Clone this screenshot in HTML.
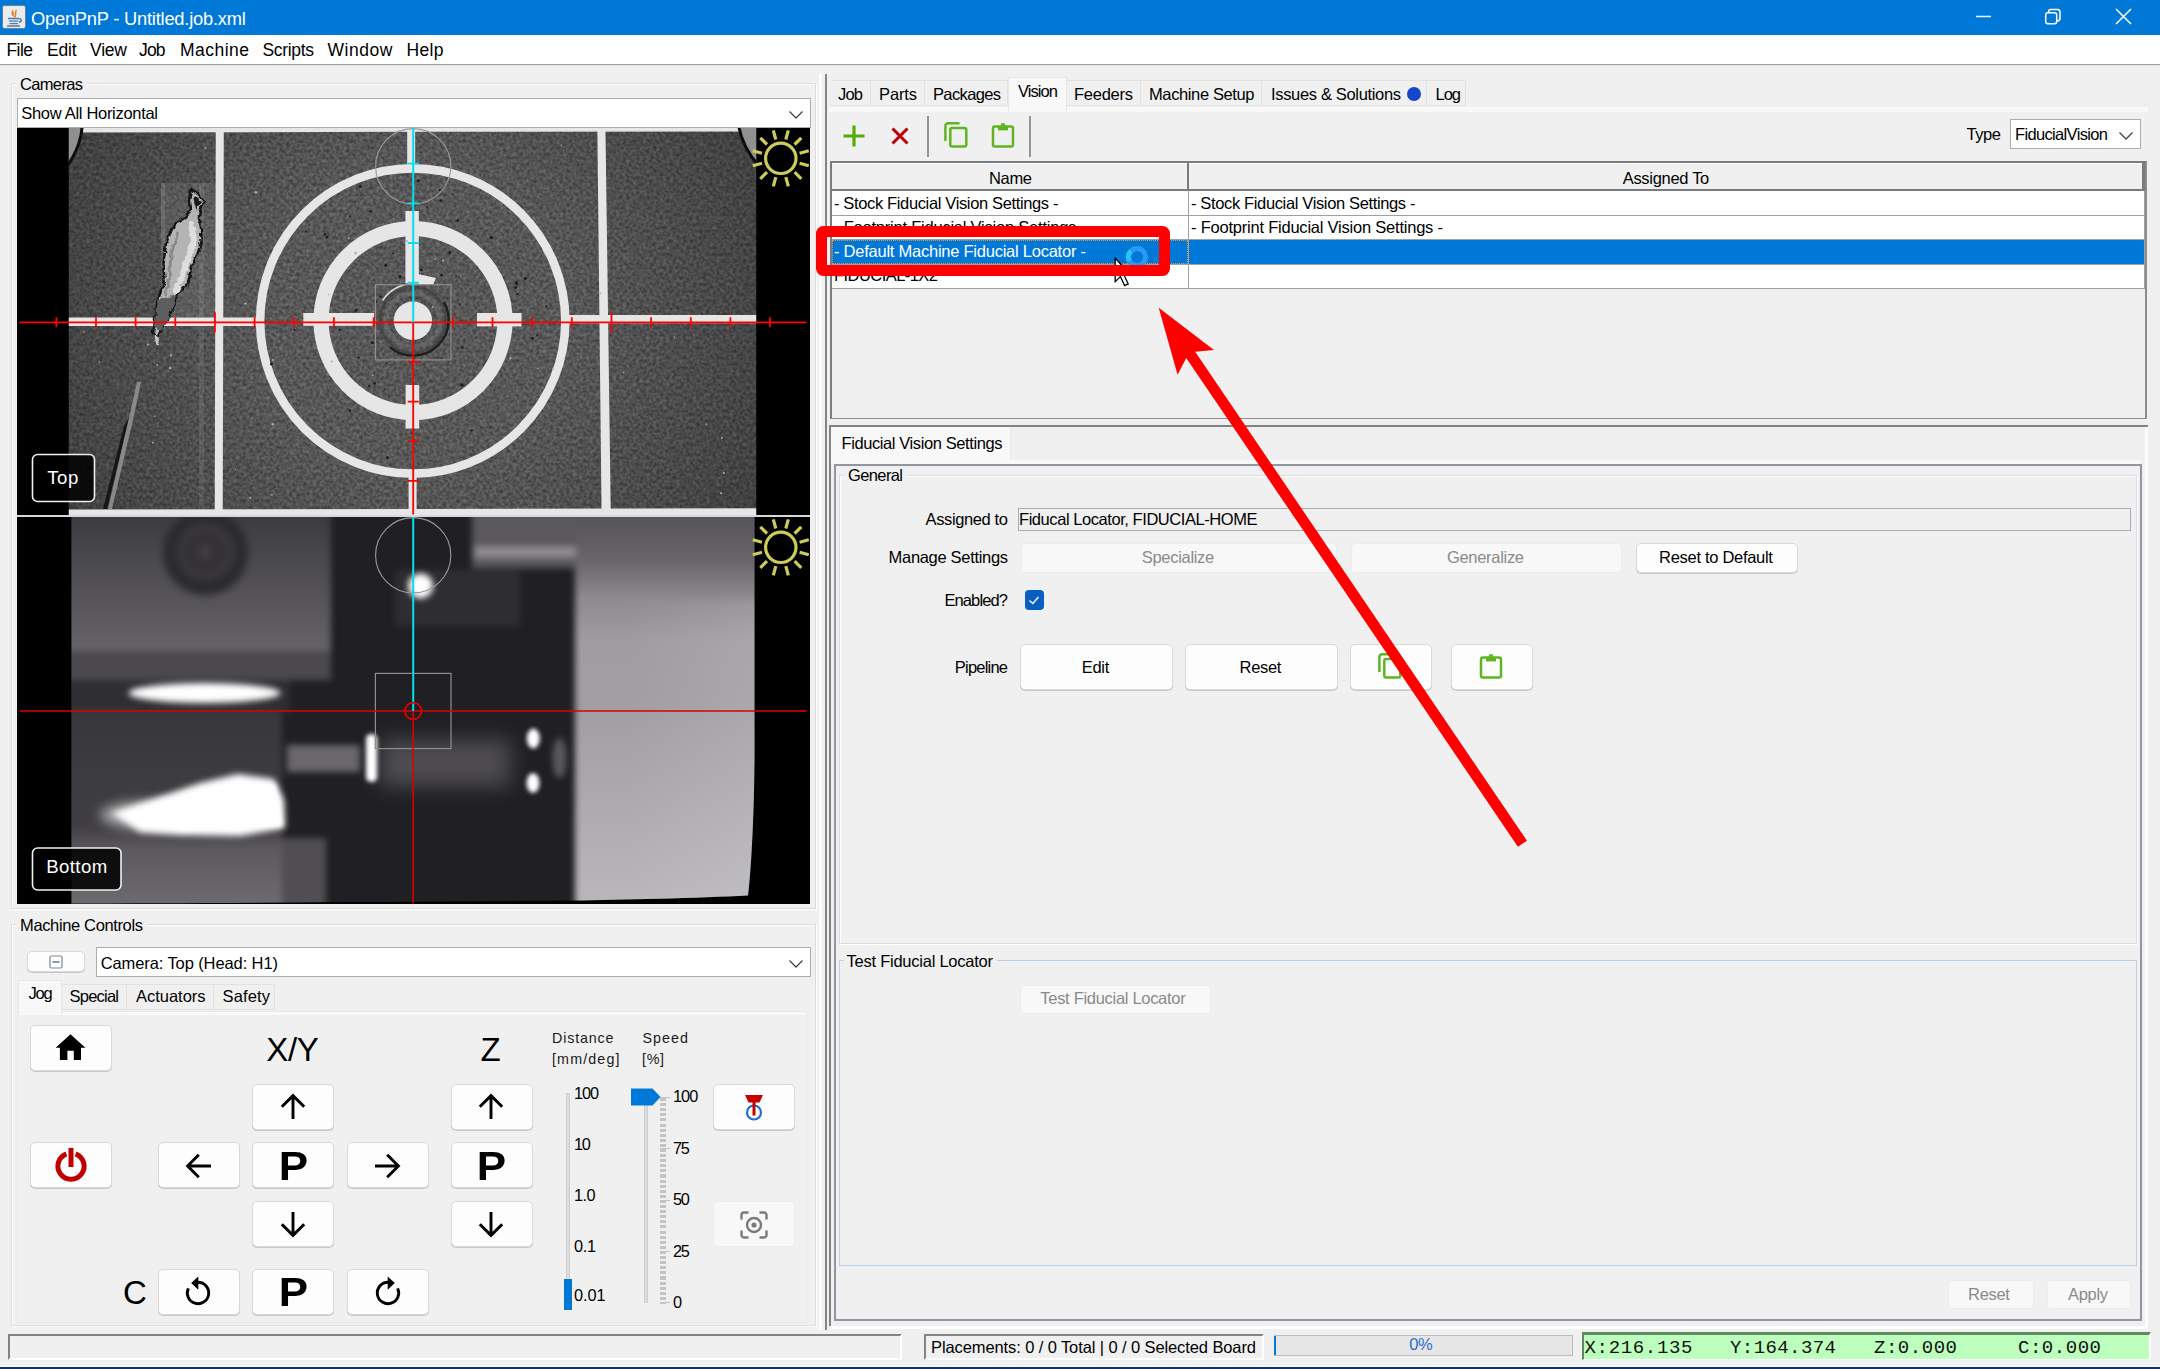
<!DOCTYPE html>
<html><head><meta charset="utf-8"><title>OpenPnP - Untitled.job.xml</title>
<style>
html,body{margin:0;padding:0;}
body{width:2160px;height:1369px;position:relative;overflow:hidden;background:#f0f0f0;font-family:"Liberation Sans",sans-serif;}
</style></head><body>
<div style="position:absolute;left:0px;top:0px;width:2160px;height:35px;background:#0078d7;"></div>
<svg style="position:absolute;left:2px;top:5px" width="24" height="24" viewBox="0 0 24 24">
<rect x="0.5" y="0.5" width="23" height="23" rx="2" fill="#e9ebee" stroke="#6e7f94" stroke-width="1"/>
<path d="M12 3 C9 6 14 8 11 12 C10 9 8 8 12 3Z" fill="#e8761b"/>
<path d="M14.5 5 C12 7.5 15.5 9 12.5 12.5" stroke="#e8761b" stroke-width="1.3" fill="none"/>
<path d="M6 13.5h11 M17 14c3-1 3 3 0 3" stroke="#4d79a8" stroke-width="1.4" fill="none"/>
<path d="M7 16.2h9.5 M7.5 18.6h8.5 M5 21h13" stroke="#4d79a8" stroke-width="1.3" fill="none"/>
</svg>
<span style="position:absolute;left:31.00px;top:8.66px;font:18.30px/20px 'Liberation Sans',sans-serif;color:#fff;letter-spacing:-0.216px;white-space:pre;">OpenPnP - Untitled.job.xml</span>
<svg style="position:absolute;left:1960px;top:0" width="200" height="35" viewBox="1960 0 200 35" fill="none" stroke="#fff" stroke-width="1.5">
<path d="M1976 16.5h15"/>
<rect x="2045.7" y="12.7" width="11" height="11" rx="2.2"/>
<path d="M2048.5 12.5v-0.6a2.4 2.4 0 0 1 2.4-2.4h6.5a2.6 2.6 0 0 1 2.6 2.6v6.3a2.4 2.4 0 0 1-2.4 2.4h-0.6"/>
<path d="M2116 9l15 15M2131 9l-15 15"/>
</svg>
<div style="position:absolute;left:0px;top:35px;width:2160px;height:29px;background:#fff;"></div>
<div style="position:absolute;left:0px;top:64px;width:2160px;height:1px;background:#a0a0a0;"></div>
<div style="position:absolute;left:0px;top:65px;width:2160px;height:1px;background:#e3e3e3;"></div>
<span style="position:absolute;left:6.50px;top:40.24px;font:17.50px/20px 'Liberation Sans',sans-serif;color:#000;letter-spacing:-0.567px;white-space:pre;">File</span>
<span style="position:absolute;left:47.00px;top:40.24px;font:17.50px/20px 'Liberation Sans',sans-serif;color:#000;letter-spacing:-0.219px;white-space:pre;">Edit</span>
<span style="position:absolute;left:90.00px;top:40.24px;font:17.50px/20px 'Liberation Sans',sans-serif;color:#000;letter-spacing:-0.206px;white-space:pre;">View</span>
<span style="position:absolute;left:139.00px;top:40.24px;font:17.50px/20px 'Liberation Sans',sans-serif;color:#000;letter-spacing:-0.808px;white-space:pre;">Job</span>
<span style="position:absolute;left:180.00px;top:40.24px;font:17.50px/20px 'Liberation Sans',sans-serif;color:#000;letter-spacing:0.475px;white-space:pre;">Machine</span>
<span style="position:absolute;left:262.50px;top:40.24px;font:17.50px/20px 'Liberation Sans',sans-serif;color:#000;letter-spacing:-0.331px;white-space:pre;">Scripts</span>
<span style="position:absolute;left:327.50px;top:40.24px;font:17.50px/20px 'Liberation Sans',sans-serif;color:#000;letter-spacing:0.551px;white-space:pre;">Window</span>
<span style="position:absolute;left:406.50px;top:40.24px;font:17.50px/20px 'Liberation Sans',sans-serif;color:#000;letter-spacing:0.336px;white-space:pre;">Help</span>
<div style="position:absolute;left:11px;top:83px;width:805px;height:826px;border:1px solid #dcdcdc;box-sizing:border-box;box-shadow:1px 1px 0 #fff, inset 1px 1px 0 #fff;"></div>
<div style="position:absolute;left:17px;top:81px;width:70px;height:6px;background:#f0f0f0;"></div>
<span style="position:absolute;left:20.00px;top:73.78px;font:16.50px/20px 'Liberation Sans',sans-serif;color:#000;letter-spacing:-0.656px;white-space:pre;">Cameras</span>
<div style="position:absolute;left:17px;top:98px;width:794px;height:30px;background:#fff;border:1px solid #abadb3;box-sizing:border-box;"></div>
<span style="position:absolute;left:21.30px;top:103.28px;font:16.50px/20px 'Liberation Sans',sans-serif;color:#000;letter-spacing:-0.303px;white-space:pre;">Show All Horizontal</span>
<svg style="position:absolute;left:788px;top:110px" width="16" height="10" viewBox="0 0 16 10"><path d="M1.5 1.5L8 8L14.5 1.5" fill="none" stroke="#444" stroke-width="1.3"/></svg>
<div style="position:absolute;left:11px;top:924px;width:805px;height:402px;border:1px solid #dcdcdc;box-sizing:border-box;box-shadow:1px 1px 0 #fff, inset 1px 1px 0 #fff;"></div>
<div style="position:absolute;left:17px;top:922px;width:130px;height:6px;background:#f0f0f0;"></div>
<span style="position:absolute;left:20.00px;top:914.78px;font:16.50px/20px 'Liberation Sans',sans-serif;color:#000;letter-spacing:-0.360px;white-space:pre;">Machine Controls</span>
<div style="position:absolute;left:27px;top:951px;width:58px;height:21px;background:#fdfdfd;border:1px solid #d9d9d9;border-radius:5px;box-sizing:border-box;box-shadow:0 1px 0 #c8c8c8;"></div>
<svg style="position:absolute;left:49px;top:955px" width="14" height="14" viewBox="0 0 14 14"><rect x="1" y="1" width="12" height="12" rx="1.5" fill="#fff" stroke="#7b8794" stroke-width="1.2"/><path d="M3.5 7h7" stroke="#4a6fa5" stroke-width="1.4"/></svg>
<div style="position:absolute;left:96px;top:947px;width:715px;height:30px;background:#fff;border:1px solid #abadb3;box-sizing:border-box;"></div>
<span style="position:absolute;left:100.70px;top:952.78px;font:16.50px/20px 'Liberation Sans',sans-serif;color:#000;letter-spacing:-0.102px;white-space:pre;">Camera: Top (Head: H1)</span>
<svg style="position:absolute;left:788px;top:959px" width="16" height="10" viewBox="0 0 16 10"><path d="M1.5 1.5L8 8L14.5 1.5" fill="none" stroke="#444" stroke-width="1.3"/></svg>
<div style="position:absolute;left:18px;top:1012px;width:788px;height:307px;background:#f0f0f0;border-top:3px solid #f8f8f8;box-shadow:0 0 0 1px #e8e8e8;"></div>
<div style="position:absolute;left:18px;top:980px;width:44px;height:34px;background:#f8f8f8;border:1px solid #e6e6e6;border-bottom:none;box-sizing:border-box;"></div>
<div style="position:absolute;left:62px;top:984px;width:65px;height:26px;background:#f0f0f0;border:1px solid #e2e2e2;border-left:none;box-sizing:border-box;"></div>
<div style="position:absolute;left:127px;top:984px;width:87px;height:26px;background:#f0f0f0;border:1px solid #e2e2e2;border-left:none;box-sizing:border-box;"></div>
<div style="position:absolute;left:214px;top:984px;width:61px;height:26px;background:#f0f0f0;border:1px solid #e2e2e2;border-left:none;box-sizing:border-box;"></div>
<span style="position:absolute;left:28.50px;top:983.28px;font:16.50px/20px 'Liberation Sans',sans-serif;color:#000;letter-spacing:-1.200px;white-space:pre;">Jog</span>
<span style="position:absolute;left:69.50px;top:986.28px;font:16.50px/20px 'Liberation Sans',sans-serif;color:#000;letter-spacing:-0.770px;white-space:pre;">Special</span>
<span style="position:absolute;left:136.00px;top:986.28px;font:16.50px/20px 'Liberation Sans',sans-serif;color:#000;letter-spacing:-0.025px;white-space:pre;">Actuators</span>
<span style="position:absolute;left:222.50px;top:986.28px;font:16.50px/20px 'Liberation Sans',sans-serif;color:#000;letter-spacing:0.144px;white-space:pre;">Safety</span>
<div style="position:absolute;left:30px;top:1025px;width:82px;height:46px;background:#fdfdfd;border:1px solid #d9d9d9;border-radius:5px;box-sizing:border-box;box-shadow:0 1px 0 #c8c8c8;"></div>
<svg style="position:absolute;left:55px;top:1033px" width="32" height="28" viewBox="0 0 32 28"><path d="M15.5 1.2L0.6 14.8H4.9V27H12.4V17.8H18.8V27H26V14.8H30.4Z" fill="#000"/></svg>
<div style="position:absolute;left:30px;top:1142px;width:82px;height:46px;background:#fdfdfd;border:1px solid #d9d9d9;border-radius:5px;box-sizing:border-box;box-shadow:0 1px 0 #c8c8c8;"></div>
<svg style="position:absolute;left:50.5px;top:1144px" width="40" height="42" viewBox="-20 -22.2 40 42"><path d="M-4.6 -12.3A13.1 13.1 0 1 0 4.6 -12.3" fill="none" stroke="#c00000" stroke-width="5"/><path d="M0 -18.3V0.8" stroke="#c00000" stroke-width="5"/></svg>
<span style="position:absolute;left:266.20px;top:1039.57px;font:33.00px/20px 'Liberation Sans',sans-serif;color:#000;letter-spacing:-0.300px;white-space:pre;">X/Y</span>
<span style="position:absolute;left:480.42px;top:1039.57px;font:33.00px/20px 'Liberation Sans',sans-serif;color:#000;letter-spacing:0.000px;white-space:pre;">Z</span>
<div style="position:absolute;left:252px;top:1084px;width:82px;height:46px;background:#fdfdfd;border:1px solid #d9d9d9;border-radius:5px;box-sizing:border-box;box-shadow:0 1px 0 #c8c8c8;"></div>
<svg style="position:absolute;left:278px;top:1092px;transform:rotate(0deg)" width="30" height="30" viewBox="-15 -15 30 30"><path d="M0 12V-10.5M-11.2 -0.2L0 -11.4L11.2 -0.2" fill="none" stroke="#000" stroke-width="2.9"/></svg>
<div style="position:absolute;left:451px;top:1084px;width:82px;height:46px;background:#fdfdfd;border:1px solid #d9d9d9;border-radius:5px;box-sizing:border-box;box-shadow:0 1px 0 #c8c8c8;"></div>
<svg style="position:absolute;left:476px;top:1092px;transform:rotate(0deg)" width="30" height="30" viewBox="-15 -15 30 30"><path d="M0 12V-10.5M-11.2 -0.2L0 -11.4L11.2 -0.2" fill="none" stroke="#000" stroke-width="2.9"/></svg>
<div style="position:absolute;left:158px;top:1142px;width:82px;height:46px;background:#fdfdfd;border:1px solid #d9d9d9;border-radius:5px;box-sizing:border-box;box-shadow:0 1px 0 #c8c8c8;"></div>
<svg style="position:absolute;left:183.5px;top:1150.5px;transform:rotate(-90deg)" width="30" height="30" viewBox="-15 -15 30 30"><path d="M0 12V-10.5M-11.2 -0.2L0 -11.4L11.2 -0.2" fill="none" stroke="#000" stroke-width="2.9"/></svg>
<div style="position:absolute;left:252px;top:1142px;width:82px;height:46px;background:#fdfdfd;border:1px solid #d9d9d9;border-radius:5px;box-sizing:border-box;box-shadow:0 1px 0 #c8c8c8;"></div>
<span style="position:absolute;left:279.96px;top:1155.74px;font:40.00px/20px 'Liberation Sans',sans-serif;font-weight:bold;color:#000;letter-spacing:0.000px;white-space:pre;transform:scaleX(1.1);">P</span>
<div style="position:absolute;left:347px;top:1142px;width:82px;height:46px;background:#fdfdfd;border:1px solid #d9d9d9;border-radius:5px;box-sizing:border-box;box-shadow:0 1px 0 #c8c8c8;"></div>
<svg style="position:absolute;left:372px;top:1150.5px;transform:rotate(90deg)" width="30" height="30" viewBox="-15 -15 30 30"><path d="M0 12V-10.5M-11.2 -0.2L0 -11.4L11.2 -0.2" fill="none" stroke="#000" stroke-width="2.9"/></svg>
<div style="position:absolute;left:451px;top:1142px;width:82px;height:46px;background:#fdfdfd;border:1px solid #d9d9d9;border-radius:5px;box-sizing:border-box;box-shadow:0 1px 0 #c8c8c8;"></div>
<span style="position:absolute;left:478.46px;top:1155.74px;font:40.00px/20px 'Liberation Sans',sans-serif;font-weight:bold;color:#000;letter-spacing:0.000px;white-space:pre;transform:scaleX(1.1);">P</span>
<div style="position:absolute;left:252px;top:1201px;width:82px;height:46px;background:#fdfdfd;border:1px solid #d9d9d9;border-radius:5px;box-sizing:border-box;box-shadow:0 1px 0 #c8c8c8;"></div>
<svg style="position:absolute;left:278px;top:1209px;transform:rotate(180deg)" width="30" height="30" viewBox="-15 -15 30 30"><path d="M0 12V-10.5M-11.2 -0.2L0 -11.4L11.2 -0.2" fill="none" stroke="#000" stroke-width="2.9"/></svg>
<div style="position:absolute;left:451px;top:1201px;width:82px;height:46px;background:#fdfdfd;border:1px solid #d9d9d9;border-radius:5px;box-sizing:border-box;box-shadow:0 1px 0 #c8c8c8;"></div>
<svg style="position:absolute;left:476px;top:1209px;transform:rotate(180deg)" width="30" height="30" viewBox="-15 -15 30 30"><path d="M0 12V-10.5M-11.2 -0.2L0 -11.4L11.2 -0.2" fill="none" stroke="#000" stroke-width="2.9"/></svg>
<span style="position:absolute;left:123.08px;top:1283.07px;font:33.00px/20px 'Liberation Sans',sans-serif;color:#000;letter-spacing:0.000px;white-space:pre;">C</span>
<div style="position:absolute;left:158px;top:1269px;width:82px;height:46px;background:#fdfdfd;border:1px solid #d9d9d9;border-radius:5px;box-sizing:border-box;box-shadow:0 1px 0 #c8c8c8;"></div>
<svg style="position:absolute;left:178.3px;top:1272.9px;transform:none" width="40" height="40" viewBox="-20 -20 40 40"><path d="M0 -10.7A10.7 10.7 0 1 1 -9.6 -4.7" fill="none" stroke="#000" stroke-width="2.9"/><path d="M0.3 -16.6V-3.2L-6.8 -9.9Z" fill="#000"/></svg>
<div style="position:absolute;left:252px;top:1269px;width:82px;height:46px;background:#fdfdfd;border:1px solid #d9d9d9;border-radius:5px;box-sizing:border-box;box-shadow:0 1px 0 #c8c8c8;"></div>
<span style="position:absolute;left:279.96px;top:1281.74px;font:40.00px/20px 'Liberation Sans',sans-serif;font-weight:bold;color:#000;letter-spacing:0.000px;white-space:pre;transform:scaleX(1.1);">P</span>
<div style="position:absolute;left:347px;top:1269px;width:82px;height:46px;background:#fdfdfd;border:1px solid #d9d9d9;border-radius:5px;box-sizing:border-box;box-shadow:0 1px 0 #c8c8c8;"></div>
<svg style="position:absolute;left:367.7px;top:1272.9px;transform:scale(-1,1)" width="40" height="40" viewBox="-20 -20 40 40"><path d="M0 -10.7A10.7 10.7 0 1 1 -9.6 -4.7" fill="none" stroke="#000" stroke-width="2.9"/><path d="M0.3 -16.6V-3.2L-6.8 -9.9Z" fill="#000"/></svg>
<span style="position:absolute;left:552.00px;top:1028.05px;font:14.30px/20px 'Liberation Sans',sans-serif;color:#1a1a1a;letter-spacing:0.838px;white-space:pre;">Distance</span>
<span style="position:absolute;left:552.00px;top:1049.05px;font:14.30px/20px 'Liberation Sans',sans-serif;color:#1a1a1a;letter-spacing:1.128px;white-space:pre;">[mm/deg]</span>
<span style="position:absolute;left:642.50px;top:1028.05px;font:14.30px/20px 'Liberation Sans',sans-serif;color:#1a1a1a;letter-spacing:1.037px;white-space:pre;">Speed</span>
<span style="position:absolute;left:642.00px;top:1049.05px;font:14.30px/20px 'Liberation Sans',sans-serif;color:#1a1a1a;letter-spacing:0.670px;white-space:pre;">[%]</span>
<div style="position:absolute;left:566px;top:1093px;width:4px;height:210px;background:#dcdcdc;border:1px solid #cfcfcf;box-sizing:border-box;"></div>
<div style="position:absolute;left:564px;top:1279px;width:8px;height:31px;background:#0078d7;"></div>
<span style="position:absolute;left:574.00px;top:1082.85px;font:16.30px/20px 'Liberation Sans',sans-serif;color:#000;letter-spacing:-1.098px;white-space:pre;">100</span>
<span style="position:absolute;left:574.00px;top:1133.85px;font:16.30px/20px 'Liberation Sans',sans-serif;color:#000;letter-spacing:-1.200px;white-space:pre;">10</span>
<span style="position:absolute;left:574.00px;top:1184.85px;font:16.30px/20px 'Liberation Sans',sans-serif;color:#000;letter-spacing:-0.580px;white-space:pre;">1.0</span>
<span style="position:absolute;left:574.00px;top:1235.85px;font:16.30px/20px 'Liberation Sans',sans-serif;color:#000;letter-spacing:-0.330px;white-space:pre;">0.1</span>
<span style="position:absolute;left:574.00px;top:1285.35px;font:16.30px/20px 'Liberation Sans',sans-serif;color:#000;letter-spacing:-0.075px;white-space:pre;">0.01</span>
<div style="position:absolute;left:644px;top:1100px;width:4px;height:203px;background:#dcdcdc;border:1px solid #cfcfcf;box-sizing:border-box;"></div>
<svg style="position:absolute;left:631px;top:1088px" width="30" height="18" viewBox="0 0 30 18"><path d="M0 0.5H21.5L29.5 9L21.5 17.5H0Z" fill="#0078d7"/></svg>
<div style="position:absolute;left:660px;top:1098px;width:6px;height:206px;background:repeating-linear-gradient(#c4c4c4 0,#c4c4c4 3px,transparent 3px,transparent 5.1px);"></div>
<div style="position:absolute;left:660px;top:1097px;width:10px;height:1px;background:#c4c4c4;"></div>
<div style="position:absolute;left:660px;top:1148px;width:10px;height:1px;background:#c4c4c4;"></div>
<div style="position:absolute;left:660px;top:1199.5px;width:10px;height:1px;background:#c4c4c4;"></div>
<div style="position:absolute;left:660px;top:1250.5px;width:10px;height:1px;background:#c4c4c4;"></div>
<div style="position:absolute;left:660px;top:1302px;width:10px;height:1px;background:#c4c4c4;"></div>
<span style="position:absolute;left:673.00px;top:1086.25px;font:16.30px/20px 'Liberation Sans',sans-serif;color:#000;letter-spacing:-0.948px;white-space:pre;">100</span>
<span style="position:absolute;left:673.00px;top:1137.95px;font:16.30px/20px 'Liberation Sans',sans-serif;color:#000;letter-spacing:-1.200px;white-space:pre;">75</span>
<span style="position:absolute;left:673.00px;top:1189.35px;font:16.30px/20px 'Liberation Sans',sans-serif;color:#000;letter-spacing:-1.200px;white-space:pre;">50</span>
<span style="position:absolute;left:673.00px;top:1240.75px;font:16.30px/20px 'Liberation Sans',sans-serif;color:#000;letter-spacing:-1.200px;white-space:pre;">25</span>
<span style="position:absolute;left:673.00px;top:1292.15px;font:16.30px/20px 'Liberation Sans',sans-serif;color:#000;letter-spacing:0.000px;white-space:pre;">0</span>
<div style="position:absolute;left:713px;top:1084px;width:82px;height:46px;background:#fdfdfd;border:1px solid #d9d9d9;border-radius:5px;box-sizing:border-box;box-shadow:0 1px 0 #c8c8c8;"></div>
<svg style="position:absolute;left:738px;top:1092px" width="32" height="32" viewBox="0 0 32 32"><path d="M7 3h18l-3.5 7.5h-11Z" fill="#c80000"/><circle cx="16" cy="20.5" r="7" fill="none" stroke="#1f6fd6" stroke-width="2.2"/><path d="M16 10v13.5" stroke="#c80000" stroke-width="3"/></svg>
<div style="position:absolute;left:713px;top:1201px;width:82px;height:46px;background:#f8f8f8;border:1px solid #ececec;border-radius:4px;box-sizing:border-box;"></div>
<svg style="position:absolute;left:738px;top:1209px" width="32" height="32" viewBox="0 0 32 32" fill="none" stroke="#7a7a7a" stroke-width="2.4"><path d="M3.5 10.5V6a2.5 2.5 0 0 1 2.5-2.5h4.5M21.5 3.5H26a2.5 2.5 0 0 1 2.5 2.5v4.5M28.5 21.5V26a2.5 2.5 0 0 1-2.5 2.5h-4.5M10.5 28.5H6A2.5 2.5 0 0 1 3.5 26v-4.5"/><circle cx="16" cy="16" r="7"/><circle cx="16" cy="16" r="2.6" fill="#7a7a7a" stroke="none"/></svg>
<div style="position:absolute;left:819px;top:74px;width:3px;height:1256px;background:#fcfcfc;"></div>
<div style="position:absolute;left:825px;top:74px;width:2px;height:1256px;background:#858585;"></div>
<div style="position:absolute;left:8px;top:1334px;width:894px;height:26px;border-top:2px solid #848484;border-left:2px solid #848484;border-bottom:2px solid #fff;border-right:2px solid #fff;box-sizing:border-box;"></div>
<div style="position:absolute;left:924px;top:1334px;width:340px;height:26px;border-top:2px solid #848484;border-left:2px solid #848484;border-bottom:2px solid #fff;border-right:2px solid #fff;box-sizing:border-box;"></div>
<span style="position:absolute;left:931.00px;top:1337.28px;font:16.50px/20px 'Liberation Sans',sans-serif;color:#000;letter-spacing:-0.102px;white-space:pre;">Placements: 0 / 0 Total | 0 / 0 Selected Board</span>
<div style="position:absolute;left:1274px;top:1335px;width:299px;height:21px;background:#e6e6e6;border:1px solid #bcbcbc;box-sizing:border-box;"></div>
<div style="position:absolute;left:1274px;top:1336px;width:2px;height:19px;background:#0078d7;"></div>
<span style="position:absolute;left:1409.23px;top:1334.28px;font:16.50px/20px 'Liberation Sans',sans-serif;color:#2a6fc9;letter-spacing:-0.300px;white-space:pre;">0%</span>
<div style="position:absolute;left:1582px;top:1332px;width:569px;height:28px;background:#bdffbd;border-top:3px solid #5f8a5f;border-left:2px solid #5f8a5f;border-right:2px solid #fff;border-bottom:1px solid #fff;box-sizing:border-box;"></div>
<span style="position:absolute;left:1584.50px;top:1338.42px;font:19.00px/20px 'Liberation Mono',monospace;color:#111;letter-spacing:0.673px;white-space:pre;">X:216.135</span>
<span style="position:absolute;left:1730.00px;top:1338.42px;font:19.00px/20px 'Liberation Mono',monospace;color:#111;letter-spacing:0.423px;white-space:pre;">Y:164.374</span>
<span style="position:absolute;left:1874.00px;top:1338.42px;font:19.00px/20px 'Liberation Mono',monospace;color:#111;letter-spacing:0.532px;white-space:pre;">Z:0.000</span>
<span style="position:absolute;left:2018.00px;top:1338.42px;font:19.00px/20px 'Liberation Mono',monospace;color:#111;letter-spacing:0.532px;white-space:pre;">C:0.000</span>
<div style="position:absolute;left:0px;top:1366px;width:2160px;height:1px;background:#fbfbfb;"></div>
<div style="position:absolute;left:0px;top:1367px;width:2160px;height:2px;background:#12306a;"></div>
<div style="position:absolute;left:17px;top:515px;width:793px;height:2px;background:#d8d8d8;"></div>
<svg style="position:absolute;left:17px;top:128px" width="793" height="387" viewBox="17 128 793 387">
<defs>
<filter id="nz" x="0" y="0" width="100%" height="100%" color-interpolation-filters="sRGB">
<feTurbulence type="fractalNoise" baseFrequency="0.3" numOctaves="2" seed="7" result="t"/>
<feColorMatrix in="t" type="matrix" values="0.3 0 0 0 0.195  0.3 0 0 0 0.195  0.3 0 0 0 0.195  0 0 0 0 1"/>
</filter>
<filter id="rough" x="-20%" y="-10%" width="140%" height="120%" color-interpolation-filters="sRGB"><feTurbulence type="fractalNoise" baseFrequency="0.18" numOctaves="2" seed="11" result="t"/><feDisplacementMap in="SourceGraphic" in2="t" scale="5" xChannelSelector="R" yChannelSelector="G"/><feGaussianBlur stdDeviation="0.5"/></filter>
<filter id="b1" color-interpolation-filters="sRGB"><feGaussianBlur stdDeviation="0.7"/></filter>
<filter id="b3" x="-50%" y="-50%" width="200%" height="200%" color-interpolation-filters="sRGB"><feGaussianBlur stdDeviation="3"/></filter>
<radialGradient id="vg" cx="413" cy="322" r="430" gradientUnits="userSpaceOnUse"><stop offset="0" stop-color="#000" stop-opacity="0"/><stop offset="0.35" stop-color="#000" stop-opacity="0"/><stop offset="0.7" stop-color="#000" stop-opacity="0.17"/><stop offset="1" stop-color="#000" stop-opacity="0.32"/></radialGradient>
<clipPath id="tc"><rect x="68.8" y="128" width="687.4" height="387"/></clipPath>
</defs>
<rect x="17" y="128" width="793" height="387" fill="#000"/>
<g clip-path="url(#tc)"><rect x="60" y="120" width="710" height="400" filter="url(#nz)"/><rect x="60" y="120" width="710" height="400" fill="url(#vg)"/><g filter="url(#b1)"><path d="M60 120H770V131.4L413 131.8L60 132.6Z" fill="#e6e6e6"/><path d="M60 509.4L413 509L770 508.3V520H60Z" fill="#e6e6e6"/><path d="M60 120H82.5C82.5 138 77 152 66 168Z" fill="#909090" stroke="#0c0c0c" stroke-width="3"/><path d="M770 120H737.5C740 138 748 154 759 166Z" fill="#909090" stroke="#0c0c0c" stroke-width="3"/><path d="M215.8 125H223.8L222.7 515H214.7Z" fill="#e6e6e6"/><path d="M597.3 125H605.4L610.8 515H601.6Z" fill="#e6e6e6"/><rect x="407.2" y="125" width="8" height="45" fill="#e6e6e6"/><rect x="408.6" y="472" width="8" height="45" fill="#e6e6e6"/><path d="M60 317.4H258V326H60Z" fill="#e6e6e6"/><path d="M566 315H770V323.3H566Z" fill="#e6e6e6"/><circle cx="412.7" cy="321" r="152.6" fill="none" stroke="#e6e6e6" stroke-width="8.6"/><circle cx="413" cy="320.6" r="92" fill="none" stroke="#e6e6e6" stroke-width="15.2"/><rect x="405.4" y="211" width="13.4" height="72" fill="#e6e6e6"/><path d="M418 274L436 278L433 285H418Z" fill="#e6e6e6"/><rect x="405.6" y="385" width="13.6" height="43.6" fill="#e6e6e6"/><rect x="303.3" y="313" width="70.7" height="12.8" fill="#e6e6e6"/><rect x="477" y="313" width="44.5" height="13.4" fill="#e6e6e6"/><circle cx="413.1" cy="320" r="36.6" fill="#000" fill-opacity="0.04"/><circle cx="413.1" cy="320" r="35.6" fill="none" stroke="#1e1e1e" stroke-width="2.4" stroke-dasharray="100 123.7" stroke-dashoffset="19"/><circle cx="413.1" cy="320" r="36.2" fill="none" stroke="#dadada" stroke-width="1.5" stroke-dasharray="42 185.4" stroke-dashoffset="-134"/><circle cx="413.1" cy="320" r="33" fill="none" stroke="#3a3a3a" stroke-opacity="0.5" stroke-width="3"/><circle cx="413.1" cy="320" r="27" fill="none" stroke="#8a8a8a" stroke-opacity="0.25" stroke-width="5"/><circle cx="412.9" cy="320.7" r="19.2" fill="#e6e6e6"/><rect x="161" y="183" width="55" height="134" fill="#fff" opacity="0.075"/><rect x="161" y="183" width="4" height="70" fill="#fff" opacity="0.10"/><rect x="199" y="183" width="5" height="330" fill="#fff" opacity="0.08"/><g filter="url(#rough)"><path d="M191 189.5L196 192L204 201.5L200 211L198.9 217.3L201 228L201.5 241L197.5 254L191 267.3L188.3 283L176.5 295L172.6 308L167.3 321.2L160 331L156.8 338.2L153 332L154.2 326.4L155.5 314.6L158.1 298.8L164.7 281.7L163.4 264.6L166 243.6L172 229L177.8 221.3L186 218L190 210L189 200Z" fill="#b4b4b4" stroke="#141414" stroke-width="2.4" stroke-linejoin="round"/><path d="M158.5 299L176 295.5L172.6 308L167.3 321.2L160 331L154.5 326L155.5 314.6Z" fill="#5e5e5e"/><path d="M191 224L194 240L188 258L182 276L176 290" fill="none" stroke="#dedede" stroke-width="6" stroke-linejoin="round" stroke-linecap="round"/><path d="M178 232L171 255L169 280L165 296" fill="none" stroke="#8a8a8a" stroke-width="3" stroke-linejoin="round"/><path d="M193 196L201 201L196 210Z" fill="#1a1a1a"/><path d="M156 336L158 345" stroke="#c8c8c8" stroke-width="3" fill="none"/></g><path d="M129 418L107 509L103 509L124 426Z" fill="#161616"/><path d="M141 382L133 420L112 509L108 509L129 418L137 382Z" fill="#9a9a9a" opacity="0.8"/></g><g fill="#1c1c1c"><circle cx="327.0" cy="237.2" r="1.4"/><circle cx="525.2" cy="278.6" r="1.5"/><circle cx="516.2" cy="282.6" r="1.5"/><circle cx="376.0" cy="302.4" r="0.8"/><circle cx="387.4" cy="457.6" r="1.4"/><circle cx="480.8" cy="427.3" r="0.7"/><circle cx="373.3" cy="284.9" r="0.6"/><circle cx="456.3" cy="275.7" r="0.8"/><circle cx="546.4" cy="306.2" r="0.9"/><circle cx="385.8" cy="265.2" r="1.5"/><circle cx="360.4" cy="186.5" r="1.5"/><circle cx="389.2" cy="396.3" r="0.8"/><circle cx="441.7" cy="358.3" r="0.9"/><circle cx="380.8" cy="296.6" r="1.3"/><circle cx="374.5" cy="383.6" r="1.4"/><circle cx="339.4" cy="329.9" r="1.1"/><circle cx="400.0" cy="276.7" r="1.6"/><circle cx="532.7" cy="338.3" r="1.4"/><circle cx="537.3" cy="335.2" r="1.0"/><circle cx="376.9" cy="301.6" r="0.6"/><circle cx="473.2" cy="450.9" r="0.8"/><circle cx="418.1" cy="180.7" r="1.5"/><circle cx="369.2" cy="385.9" r="1.1"/><circle cx="421.3" cy="270.0" r="1.3"/><circle cx="451.8" cy="194.0" r="0.6"/><circle cx="460.0" cy="304.4" r="0.9"/><circle cx="306.2" cy="231.7" r="0.9"/><circle cx="384.6" cy="389.6" r="0.8"/><circle cx="462.4" cy="347.5" r="1.3"/><circle cx="470.4" cy="319.8" r="0.6"/><circle cx="358.5" cy="357.6" r="1.2"/><circle cx="372.4" cy="342.7" r="1.5"/><circle cx="441.5" cy="275.0" r="1.3"/><circle cx="515.8" cy="287.5" r="1.4"/><circle cx="490.6" cy="426.8" r="0.9"/><circle cx="271.4" cy="363.9" r="1.5"/><circle cx="294.5" cy="329.8" r="1.1"/><circle cx="461.9" cy="385.2" r="1.6"/><circle cx="517.3" cy="294.1" r="1.1"/><circle cx="386.8" cy="363.2" r="0.9"/><circle cx="439.7" cy="190.0" r="1.0"/><circle cx="440.8" cy="200.5" r="1.3"/><circle cx="350.2" cy="216.3" r="1.0"/><circle cx="393.2" cy="253.5" r="1.1"/><circle cx="427.2" cy="207.3" r="0.9"/><circle cx="516.8" cy="284.0" r="1.2"/><circle cx="412.5" cy="433.5" r="1.1"/><circle cx="457.7" cy="220.6" r="1.4"/><circle cx="349.8" cy="410.5" r="1.3"/><circle cx="449.7" cy="252.4" r="1.4"/><circle cx="491.2" cy="237.6" r="1.6"/><circle cx="356.0" cy="310.4" r="1.4"/><circle cx="370.6" cy="211.2" r="1.3"/><circle cx="471.6" cy="430.6" r="1.2"/><circle cx="324.9" cy="234.3" r="1.2"/></g><g fill="#b0b0b0"><circle cx="561.3" cy="145.2" r="0.7"/><circle cx="372.7" cy="375.5" r="0.8"/><circle cx="538.0" cy="368.4" r="0.6"/><circle cx="393.3" cy="218.7" r="0.6"/><circle cx="165.1" cy="252.4" r="0.7"/><circle cx="205.5" cy="148.2" r="0.9"/><circle cx="331.7" cy="361.4" r="1.0"/><circle cx="235.5" cy="469.2" r="0.6"/><circle cx="348.6" cy="238.1" r="0.9"/><circle cx="152.7" cy="442.6" r="0.9"/><circle cx="99.3" cy="362.0" r="0.7"/><circle cx="443.0" cy="260.6" r="1.0"/><circle cx="721.9" cy="437.9" r="0.9"/><circle cx="623.8" cy="372.6" r="0.9"/><circle cx="170.9" cy="355.5" r="1.0"/><circle cx="721.1" cy="493.2" r="1.0"/><circle cx="312.0" cy="465.6" r="0.6"/><circle cx="147.8" cy="344.4" r="1.0"/><circle cx="170.0" cy="367.9" r="1.2"/><circle cx="328.7" cy="294.7" r="0.8"/><circle cx="271.8" cy="494.8" r="0.9"/><circle cx="723.8" cy="473.1" r="1.0"/><circle cx="250.4" cy="498.0" r="0.9"/><circle cx="355.5" cy="253.1" r="1.3"/><circle cx="406.9" cy="241.0" r="0.9"/><circle cx="157.3" cy="365.0" r="0.9"/><circle cx="272.8" cy="424.2" r="1.2"/><circle cx="83.9" cy="332.0" r="0.8"/><circle cx="706.3" cy="424.3" r="0.8"/><circle cx="255.7" cy="192.3" r="1.3"/><circle cx="272.9" cy="360.0" r="0.9"/><circle cx="510.3" cy="358.4" r="1.1"/><circle cx="154.8" cy="416.3" r="0.8"/><circle cx="435.1" cy="259.4" r="0.8"/><circle cx="432.7" cy="306.8" r="0.9"/><circle cx="577.9" cy="353.6" r="0.6"/><circle cx="245.4" cy="303.6" r="1.2"/><circle cx="674.4" cy="336.9" r="0.6"/><circle cx="600.4" cy="293.3" r="1.0"/><circle cx="553.0" cy="368.9" r="0.9"/></g></g>
<circle cx="413.2" cy="166.2" r="37.6" fill="none" stroke="#9a9a9a" stroke-width="1.1"/><rect x="375.4" y="284.7" width="75.6" height="75.2" fill="none" stroke="#8e8e8e" stroke-width="1.2"/><path d="M19.5 322.3H806.5M413.2 322.3V514.5" stroke="#ff0000" stroke-width="1.8" fill="none"/><path d="M413.2 128V322.3" stroke="#00e0ee" stroke-width="2" fill="none"/><path d="M56.4 317.3V327.3M96.0 317.3V327.3M135.6 317.3V327.3M175.3 317.3V327.3M214.9 312.3V332.3M254.6 317.3V327.3M294.2 317.3V327.3M333.9 317.3V327.3M373.6 317.3V327.3M452.8 317.3V327.3M492.5 317.3V327.3M532.1 317.3V327.3M571.8 317.3V327.3M611.5 312.3V332.3M651.1 317.3V327.3M690.8 317.3V327.3M730.4 317.3V327.3M770.0 317.3V327.3M407.7 361.9H418.7M407.7 401.6H418.7M407.7 441.2H418.7M407.7 480.9H418.7" stroke="#ff0000" stroke-width="1.8" fill="none"/><path d="M407.7 282.7H418.7M407.7 243.0H418.7M407.7 203.4H418.7M407.7 163.7H418.7" stroke="#00e0ee" stroke-width="1.8" fill="none"/><g stroke="#cccc58" stroke-width="3.2" fill="none" stroke-linecap="butt"><circle cx="780.8" cy="158.3" r="15.2"/><path d="M799.6 163.3L808.8 165.8"/><path d="M794.6 172.1L801.3 178.8"/><path d="M785.8 177.1L788.3 186.3"/><path d="M775.8 177.1L773.3 186.3"/><path d="M767.0 172.1L760.3 178.8"/><path d="M762.0 163.3L752.8 165.8"/><path d="M762.0 153.3L752.8 150.8"/><path d="M767.0 144.5L760.3 137.8"/><path d="M775.8 139.5L773.3 130.3"/><path d="M785.8 139.5L788.3 130.3"/><path d="M794.6 144.5L801.3 137.8"/><path d="M799.6 153.3L808.8 150.8"/></g><rect x="32.5" y="454.5" width="62" height="47" rx="5" fill="#000" fill-opacity="0.85" stroke="#f0f0f0" stroke-width="1.6"/></svg>
<span style="position:absolute;left:47.30px;top:468.36px;font:18.60px/20px 'Liberation Sans',sans-serif;color:#fff;letter-spacing:0.505px;white-space:pre;">Top</span>
<svg style="position:absolute;left:17px;top:517px" width="793" height="387" viewBox="17 517 793 387">
<defs>
<filter id="g2" x="-50%" y="-50%" width="200%" height="200%" color-interpolation-filters="sRGB"><feGaussianBlur stdDeviation="2"/></filter>
<filter id="g3" x="-50%" y="-50%" width="200%" height="200%" color-interpolation-filters="sRGB"><feGaussianBlur stdDeviation="3.2"/></filter>
<filter id="g6" x="-50%" y="-50%" width="200%" height="200%" color-interpolation-filters="sRGB"><feGaussianBlur stdDeviation="6"/></filter>
<filter id="g10" x="-50%" y="-50%" width="200%" height="200%" color-interpolation-filters="sRGB"><feGaussianBlur stdDeviation="10"/></filter>
<clipPath id="bc"><path d="M71.5 517H754.5V760C754 820 751 870 748 895.5C700 898 620 900 573 900.5C400 902 200 903 71.5 903.5Z"/></clipPath>
<linearGradient id="ga" x1="0" y1="517" x2="0" y2="650" gradientUnits="userSpaceOnUse"><stop offset="0" stop-color="#3c3c40"/><stop offset="0.55" stop-color="#545257"/><stop offset="1" stop-color="#656368"/></linearGradient>
<linearGradient id="gb" x1="0" y1="711" x2="0" y2="903" gradientUnits="userSpaceOnUse"><stop offset="0" stop-color="#38383c"/><stop offset="0.6" stop-color="#403e42"/><stop offset="0.72" stop-color="#5c5a5e"/><stop offset="1" stop-color="#6c6a6e"/></linearGradient>
<linearGradient id="gr" x1="0" y1="517" x2="0" y2="903" gradientUnits="userSpaceOnUse"><stop offset="0" stop-color="#57555a"/><stop offset="0.11" stop-color="#676569"/><stop offset="0.215" stop-color="#8e8c90"/><stop offset="0.32" stop-color="#9f9da1"/><stop offset="0.5" stop-color="#a19fa3"/><stop offset="1" stop-color="#b9b7bb"/></linearGradient>
<linearGradient id="gh" x1="575" y1="0" x2="760" y2="0" gradientUnits="userSpaceOnUse"><stop offset="0.3" stop-color="#fff" stop-opacity="0"/><stop offset="1" stop-color="#fff" stop-opacity="0.1"/></linearGradient>
<radialGradient id="gc" cx="205.5" cy="552" r="48" gradientUnits="userSpaceOnUse"><stop offset="0" stop-color="#48464a"/><stop offset="0.12" stop-color="#3a383c"/><stop offset="0.3" stop-color="#302e32"/><stop offset="0.5" stop-color="#3a383c"/><stop offset="0.72" stop-color="#29292d"/><stop offset="0.85" stop-color="#2e2e32"/><stop offset="1" stop-color="#48464a" stop-opacity="0"/></radialGradient>
</defs>
<rect x="17" y="517" width="793" height="387" fill="#000"/>
<g clip-path="url(#bc)"><rect x="60" y="510" width="710" height="400" fill="#202024"/><g filter="url(#g3)"><rect x="60" y="505" width="271" height="147" fill="url(#ga)"/><rect x="60" y="651" width="271" height="29" fill="#4b494d"/><rect x="60" y="680" width="230" height="32" fill="#2f2f33"/><rect x="60" y="711" width="222" height="200" fill="url(#gb)"/><rect x="282" y="838" width="44" height="70" fill="#504e52"/><circle cx="205.5" cy="552" r="48" fill="url(#gc)"/><rect x="575" y="505" width="195" height="410" fill="url(#gr)"/><rect x="575" y="600" width="195" height="310" fill="url(#gh)"/><rect x="472" y="505" width="104" height="63" fill="#5a585c"/><rect x="474" y="546" width="102" height="12" fill="#8c8a8e"/><rect x="395" y="570" width="125" height="56" fill="#2e2e32"/><rect x="287" y="745" width="73" height="27" fill="#69676b"/></g><rect x="380" y="740" width="130" height="46" fill="#4e4c50" filter="url(#g10)"/><ellipse cx="559.5" cy="758" rx="7" ry="20" fill="#5a585c" filter="url(#g3)"/><ellipse cx="204.5" cy="693" rx="76" ry="10" fill="#fff" filter="url(#g3)"/><ellipse cx="150" cy="815" rx="50" ry="14" fill="#fff" fill-opacity="0.55" filter="url(#g6)"/><path d="M112 813L150 800L200 783L238 774L274 779L284 800L285 828L240 836L180 835L140 832Z" fill="#fff" filter="url(#g3)"/><path d="M150 806L275 784L282 826L180 830Z" fill="#fff"  filter="url(#g2)"/><rect x="366" y="734" width="11" height="48" rx="5" fill="#fff" filter="url(#g2)"/><ellipse cx="533.3" cy="738.5" rx="6.5" ry="10" fill="#fff" filter="url(#g2)"/><ellipse cx="533" cy="783" rx="6.5" ry="10" fill="#fff" filter="url(#g2)"/><circle cx="420.5" cy="586" r="12.5" fill="#fff" filter="url(#g3)"/></g>
<circle cx="413.2" cy="555.2" r="37.6" fill="none" stroke="#9a9a9a" stroke-width="1.1"/><rect x="375.4" y="673.4" width="75.6" height="75.2" fill="none" stroke="#8e8e8e" stroke-width="1.2"/><path d="M19.5 711H806.5M413.2 711V903.5" stroke="#dd0000" stroke-width="1.5" fill="none"/><path d="M413.2 517V711" stroke="#00e0ee" stroke-width="2" fill="none"/><circle cx="413.2" cy="711" r="8.3" fill="none" stroke="#dd0000" stroke-width="1.8"/><g stroke="#cccc58" stroke-width="3.2" fill="none" stroke-linecap="butt"><circle cx="780.8" cy="547.3" r="15.2"/><path d="M799.6 552.3L808.8 554.8"/><path d="M794.6 561.1L801.3 567.8"/><path d="M785.8 566.1L788.3 575.3"/><path d="M775.8 566.1L773.3 575.3"/><path d="M767.0 561.1L760.3 567.8"/><path d="M762.0 552.3L752.8 554.8"/><path d="M762.0 542.3L752.8 539.8"/><path d="M767.0 533.5L760.3 526.8"/><path d="M775.8 528.5L773.3 519.3"/><path d="M785.8 528.5L788.3 519.3"/><path d="M794.6 533.5L801.3 526.8"/><path d="M799.6 542.3L808.8 539.8"/></g><rect x="32.5" y="848" width="88.5" height="42" rx="5" fill="#000" fill-opacity="0.85" stroke="#f0f0f0" stroke-width="1.6"/></svg>
<span style="position:absolute;left:46.20px;top:856.76px;font:18.60px/20px 'Liberation Sans',sans-serif;color:#fff;letter-spacing:0.415px;white-space:pre;">Bottom</span>
<div style="position:absolute;left:829px;top:107px;width:1319px;height:318px;background:#f0f0f0;border-top:5px solid #f8f8f8;"></div>
<div style="position:absolute;left:831px;top:80px;width:40px;height:26px;background:#f0f0f0;border:1px solid #e2e2e2;border-left:none;box-sizing:border-box;"></div>
<span style="position:absolute;left:838.00px;top:83.78px;font:16.50px/20px 'Liberation Sans',sans-serif;color:#000;letter-spacing:-0.802px;white-space:pre;">Job</span>
<div style="position:absolute;left:871px;top:80px;width:54px;height:26px;background:#f0f0f0;border:1px solid #e2e2e2;border-left:none;box-sizing:border-box;"></div>
<span style="position:absolute;left:879.00px;top:83.78px;font:16.50px/20px 'Liberation Sans',sans-serif;color:#000;letter-spacing:-0.128px;white-space:pre;">Parts</span>
<div style="position:absolute;left:925px;top:80px;width:83px;height:26px;background:#f0f0f0;border:1px solid #e2e2e2;border-left:none;box-sizing:border-box;"></div>
<span style="position:absolute;left:933.00px;top:83.78px;font:16.50px/20px 'Liberation Sans',sans-serif;color:#000;letter-spacing:-0.638px;white-space:pre;">Packages</span>
<div style="position:absolute;left:1008px;top:77px;width:59px;height:34px;background:#f8f8f8;border:1px solid #e6e6e6;border-bottom:none;box-sizing:border-box;"></div>
<span style="position:absolute;left:1018.00px;top:81.28px;font:16.50px/20px 'Liberation Sans',sans-serif;color:#000;letter-spacing:-0.929px;white-space:pre;">Vision</span>
<div style="position:absolute;left:1067px;top:80px;width:74px;height:26px;background:#f0f0f0;border:1px solid #e2e2e2;border-left:none;box-sizing:border-box;"></div>
<span style="position:absolute;left:1074.00px;top:83.78px;font:16.50px/20px 'Liberation Sans',sans-serif;color:#000;letter-spacing:-0.255px;white-space:pre;">Feeders</span>
<div style="position:absolute;left:1141px;top:80px;width:121px;height:26px;background:#f0f0f0;border:1px solid #e2e2e2;border-left:none;box-sizing:border-box;"></div>
<span style="position:absolute;left:1149.00px;top:83.78px;font:16.50px/20px 'Liberation Sans',sans-serif;color:#000;letter-spacing:-0.381px;white-space:pre;">Machine Setup</span>
<div style="position:absolute;left:1262px;top:80px;width:165px;height:26px;background:#f0f0f0;border:1px solid #e2e2e2;border-left:none;box-sizing:border-box;"></div>
<span style="position:absolute;left:1271.00px;top:83.78px;font:16.50px/20px 'Liberation Sans',sans-serif;color:#000;letter-spacing:-0.338px;white-space:pre;">Issues &amp; Solutions</span>
<div style="position:absolute;left:1427px;top:80px;width:39px;height:26px;background:#f0f0f0;border:1px solid #e2e2e2;border-left:none;box-sizing:border-box;"></div>
<span style="position:absolute;left:1435.50px;top:83.78px;font:16.50px/20px 'Liberation Sans',sans-serif;color:#000;letter-spacing:-1.015px;white-space:pre;">Log</span>
<div style="position:absolute;left:1407px;top:87px;width:14px;height:14px;background:#1446c8;border-radius:50%;"></div>
<svg style="position:absolute;left:842px;top:124px" width="24" height="24" viewBox="0 0 24 24"><path d="M12 1.5v21M1.5 12h21" stroke="#55ac08" stroke-width="3.2"/></svg>
<svg style="position:absolute;left:890px;top:126px" width="20" height="20" viewBox="0 0 20 20"><path d="M2.5 2.5l15 15M17.5 2.5l-15 15" stroke="#c00000" stroke-width="3"/></svg>
<div style="position:absolute;left:927px;top:116px;width:2px;height:41px;background:#969696;"></div>
<svg style="position:absolute;left:944px;top:122px" width="24" height="26" viewBox="0 0 24 26" fill="none" stroke="#5fb521" stroke-width="2.5"><path d="M15.5 1.3H4A2.6 2.6 0 0 0 1.4 3.9V19"/><rect x="6.3" y="6" width="16" height="18.6" rx="1.8"/></svg>
<svg style="position:absolute;left:990.5px;top:121.5px" width="24" height="26" viewBox="0 0 24 26" fill="none" stroke="#5fb521" stroke-width="2.5"><rect x="2" y="4.6" width="20" height="20" rx="1.8"/><path d="M7 6.6h10" stroke-width="3.6"/><circle cx="12" cy="3.4" r="1.5" stroke-width="1.8"/></svg>
<div style="position:absolute;left:1029px;top:116px;width:2px;height:41px;background:#969696;"></div>
<span style="position:absolute;left:1966.50px;top:124.28px;font:16.50px/20px 'Liberation Sans',sans-serif;color:#000;letter-spacing:-0.424px;white-space:pre;">Type</span>
<div style="position:absolute;left:2010px;top:119px;width:131px;height:30px;background:#fff;border:1px solid #abadb3;box-sizing:border-box;"></div>
<span style="position:absolute;left:2015.00px;top:124.28px;font:16.50px/20px 'Liberation Sans',sans-serif;color:#000;letter-spacing:-0.654px;white-space:pre;">FiducialVision</span>
<svg style="position:absolute;left:2118px;top:131px" width="16" height="10" viewBox="0 0 16 10"><path d="M1.5 1.5L8 8L14.5 1.5" fill="none" stroke="#444" stroke-width="1.3"/></svg>
<div style="position:absolute;left:830px;top:161px;width:1317px;height:258px;border:2px solid #787c81;border-right:2px solid #8a8e93;border-bottom:1px solid #8a8e93;box-sizing:border-box;background:#f0f0f0;"></div>
<div style="position:absolute;left:832px;top:163px;width:1313px;height:28px;background:#f0f0f0;border-bottom:2px solid #787c81;box-sizing:border-box;border-top:1px solid #fff;"></div>
<div style="position:absolute;left:1187px;top:163px;width:2px;height:28px;background:#787c81;"></div>
<div style="position:absolute;left:2142px;top:163px;width:3px;height:28px;background:#787c81;"></div>
<span style="position:absolute;left:988.94px;top:167.78px;font:16.50px/20px 'Liberation Sans',sans-serif;color:#000;letter-spacing:-0.300px;white-space:pre;">Name</span>
<span style="position:absolute;left:1622.70px;top:167.78px;font:16.50px/20px 'Liberation Sans',sans-serif;color:#000;letter-spacing:-0.300px;white-space:pre;">Assigned To</span>
<div style="position:absolute;left:832px;top:191px;width:1313px;height:97px;background:#fff;"></div>
<div style="position:absolute;left:832px;top:240px;width:1313px;height:24px;background:#0078d7;"></div>
<div style="position:absolute;left:832px;top:215px;width:1313px;height:1px;background:#a0a0a0;"></div>
<div style="position:absolute;left:832px;top:239px;width:1313px;height:1px;background:#a0a0a0;"></div>
<div style="position:absolute;left:832px;top:264px;width:1313px;height:1px;background:#a0a0a0;"></div>
<div style="position:absolute;left:832px;top:288px;width:1313px;height:1px;background:#a0a0a0;"></div>
<div style="position:absolute;left:1188px;top:191px;width:1px;height:97px;background:#a0a0a0;"></div>
<div style="position:absolute;left:2144px;top:191px;width:1px;height:97px;background:#a0a0a0;"></div>
<span style="position:absolute;left:834.00px;top:193.28px;font:16.50px/20px 'Liberation Sans',sans-serif;color:#000;letter-spacing:-0.358px;white-space:pre;">- Stock Fiducial Vision Settings -</span>
<span style="position:absolute;left:834.00px;top:217.28px;font:16.50px/20px 'Liberation Sans',sans-serif;color:#000;letter-spacing:-0.220px;white-space:pre;">- Footprint Fiducial Vision Settings -</span>
<span style="position:absolute;left:834.00px;top:241.28px;font:16.50px/20px 'Liberation Sans',sans-serif;color:#fff;letter-spacing:-0.242px;white-space:pre;">- Default Machine Fiducial Locator -</span>
<span style="position:absolute;left:834.00px;top:265.28px;font:16.50px/20px 'Liberation Sans',sans-serif;color:#000;letter-spacing:-0.548px;white-space:pre;">FIDUCIAL-1X2</span>
<span style="position:absolute;left:1191.00px;top:193.28px;font:16.50px/20px 'Liberation Sans',sans-serif;color:#000;letter-spacing:-0.358px;white-space:pre;">- Stock Fiducial Vision Settings -</span>
<span style="position:absolute;left:1191.00px;top:217.28px;font:16.50px/20px 'Liberation Sans',sans-serif;color:#000;letter-spacing:-0.220px;white-space:pre;">- Footprint Fiducial Vision Settings -</span>
<div style="position:absolute;left:832px;top:240px;width:356px;height:24px;border:1px dotted #e8963c;box-sizing:border-box;"></div>
<div style="position:absolute;left:829px;top:425px;width:1319px;height:2px;background:#828282;"></div>
<div style="position:absolute;left:829px;top:425px;width:2px;height:901px;background:#828282;"></div>
<div style="position:absolute;left:831px;top:1325.5px;width:1317px;height:3px;background:#fdfdfd;"></div>
<div style="position:absolute;left:2145px;top:427px;width:3px;height:901.5px;background:#fdfdfd;"></div>
<div style="position:absolute;left:831px;top:427px;width:180px;height:37px;background:#f8f8f8;border-right:1px solid #e9e9e9;box-sizing:border-box;"></div>
<div style="position:absolute;left:831px;top:460px;width:1310px;height:4px;background:#f8f8f8;"></div>
<span style="position:absolute;left:841.50px;top:433.28px;font:16.50px/20px 'Liberation Sans',sans-serif;color:#000;letter-spacing:-0.404px;white-space:pre;">Fiducial Vision Settings</span>
<div style="position:absolute;left:834px;top:464px;width:1308px;height:857px;border:2px solid #9196a1;box-sizing:border-box;"></div>
<div style="position:absolute;left:839px;top:474.5px;width:1298px;height:469px;border:1px solid #dcdcdc;box-sizing:border-box;box-shadow:1px 1px 0 #fff, inset 1px 1px 0 #fff;"></div>
<div style="position:absolute;left:845px;top:472.5px;width:62px;height:6px;background:#f0f0f0;"></div>
<span style="position:absolute;left:848.00px;top:465.28px;font:16.50px/20px 'Liberation Sans',sans-serif;color:#000;letter-spacing:-0.617px;white-space:pre;">General</span>
<span style="position:absolute;left:925.50px;top:509.28px;font:16.50px/20px 'Liberation Sans',sans-serif;color:#000;letter-spacing:-0.372px;white-space:pre;">Assigned to</span>
<div style="position:absolute;left:1018px;top:508px;width:1113px;height:23px;border:1px solid #a9adb3;box-sizing:border-box;background:#f0f0f0;"></div>
<span style="position:absolute;left:1019.00px;top:509.28px;font:16.50px/20px 'Liberation Sans',sans-serif;color:#000;letter-spacing:-0.439px;white-space:pre;">Fiducal Locator, FIDUCIAL-HOME</span>
<span style="position:absolute;left:888.60px;top:547.28px;font:16.50px/20px 'Liberation Sans',sans-serif;color:#000;letter-spacing:-0.317px;white-space:pre;">Manage Settings</span>
<div style="position:absolute;left:1021px;top:543px;width:316px;height:30px;background:#f8f8f8;border:1px solid #ececec;border-radius:4px;box-sizing:border-box;"></div>
<span style="position:absolute;left:1141.74px;top:547.28px;font:16.50px/20px 'Liberation Sans',sans-serif;color:#8a8a8a;letter-spacing:-0.300px;white-space:pre;">Specialize</span>
<div style="position:absolute;left:1351px;top:543px;width:271px;height:30px;background:#f8f8f8;border:1px solid #ececec;border-radius:4px;box-sizing:border-box;"></div>
<span style="position:absolute;left:1446.95px;top:547.28px;font:16.50px/20px 'Liberation Sans',sans-serif;color:#8a8a8a;letter-spacing:-0.300px;white-space:pre;">Generalize</span>
<div style="position:absolute;left:1636px;top:543px;width:162px;height:30px;background:#fdfdfd;border:1px solid #d9d9d9;border-radius:5px;box-sizing:border-box;box-shadow:0 1px 0 #c8c8c8;"></div>
<span style="position:absolute;left:1659.09px;top:547.28px;font:16.50px/20px 'Liberation Sans',sans-serif;color:#000;letter-spacing:-0.300px;white-space:pre;">Reset to Default</span>
<span style="position:absolute;left:944.40px;top:589.78px;font:16.50px/20px 'Liberation Sans',sans-serif;color:#000;letter-spacing:-0.876px;white-space:pre;">Enabled?</span>
<div style="position:absolute;left:1024.5px;top:590px;width:19.5px;height:19.5px;background:#0a5ec2;border-radius:4px;"></div>
<svg style="position:absolute;left:1027px;top:593px" width="14" height="14" viewBox="0 0 14 14"><path d="M2.5 7.5L5.8 10.5L11.5 4" fill="none" stroke="#fff" stroke-width="1.3"/></svg>
<span style="position:absolute;left:954.80px;top:656.78px;font:16.50px/20px 'Liberation Sans',sans-serif;color:#000;letter-spacing:-0.787px;white-space:pre;">Pipeline</span>
<div style="position:absolute;left:1020px;top:644px;width:153px;height:46px;background:#fdfdfd;border:1px solid #d9d9d9;border-radius:5px;box-sizing:border-box;box-shadow:0 1px 0 #c8c8c8;"></div>
<span style="position:absolute;left:1081.73px;top:656.78px;font:16.50px/20px 'Liberation Sans',sans-serif;color:#000;letter-spacing:-0.300px;white-space:pre;">Edit</span>
<div style="position:absolute;left:1185px;top:644px;width:153px;height:46px;background:#fdfdfd;border:1px solid #d9d9d9;border-radius:5px;box-sizing:border-box;box-shadow:0 1px 0 #c8c8c8;"></div>
<span style="position:absolute;left:1239.55px;top:656.78px;font:16.50px/20px 'Liberation Sans',sans-serif;color:#000;letter-spacing:-0.300px;white-space:pre;">Reset</span>
<div style="position:absolute;left:1350px;top:644px;width:82px;height:46px;background:#fdfdfd;border:1px solid #d9d9d9;border-radius:5px;box-sizing:border-box;box-shadow:0 1px 0 #c8c8c8;"></div>
<svg style="position:absolute;left:1378px;top:653px" width="24" height="26" viewBox="0 0 24 26" fill="none" stroke="#5fb521" stroke-width="2.5"><path d="M15.5 1.3H4A2.6 2.6 0 0 0 1.4 3.9V19"/><rect x="6.3" y="6" width="16" height="18.6" rx="1.8"/></svg>
<div style="position:absolute;left:1451px;top:644px;width:82px;height:46px;background:#fdfdfd;border:1px solid #d9d9d9;border-radius:5px;box-sizing:border-box;box-shadow:0 1px 0 #c8c8c8;"></div>
<svg style="position:absolute;left:1479px;top:653px" width="24" height="26" viewBox="0 0 24 26" fill="none" stroke="#5fb521" stroke-width="2.5"><rect x="2" y="4.6" width="20" height="20" rx="1.8"/><path d="M7 6.6h10" stroke-width="3.6"/><circle cx="12" cy="3.4" r="1.5" stroke-width="1.8"/></svg>
<div style="position:absolute;left:839px;top:960px;width:1298px;height:306px;border:1px solid #b9cfe6;box-sizing:border-box;box-shadow:1px 1px 0 transparent, inset 1px 1px 0 transparent;"></div>
<div style="position:absolute;left:843.5px;top:958px;width:153.5px;height:6px;background:#f0f0f0;"></div>
<span style="position:absolute;left:846.50px;top:950.78px;font:16.50px/20px 'Liberation Sans',sans-serif;color:#000;letter-spacing:-0.241px;white-space:pre;">Test Fiducial Locator</span>
<div style="position:absolute;left:1020px;top:985px;width:191px;height:29px;background:#f8f8f8;border:1px solid #ececec;border-radius:4px;box-sizing:border-box;"></div>
<span style="position:absolute;left:1040.34px;top:988.28px;font:16.50px/20px 'Liberation Sans',sans-serif;color:#8a8a8a;letter-spacing:-0.300px;white-space:pre;">Test Fiducial Locator</span>
<div style="position:absolute;left:1948px;top:1280px;width:86px;height:29px;background:#f8f8f8;border:1px solid #ececec;border-radius:4px;box-sizing:border-box;"></div>
<span style="position:absolute;left:1968.05px;top:1284.28px;font:16.50px/20px 'Liberation Sans',sans-serif;color:#8a8a8a;letter-spacing:-0.300px;white-space:pre;">Reset</span>
<div style="position:absolute;left:2047px;top:1280px;width:84px;height:29px;background:#f8f8f8;border:1px solid #ececec;border-radius:4px;box-sizing:border-box;"></div>
<span style="position:absolute;left:2067.96px;top:1284.28px;font:16.50px/20px 'Liberation Sans',sans-serif;color:#8a8a8a;letter-spacing:-0.300px;white-space:pre;">Apply</span>
<svg style="position:absolute;left:1113px;top:256px" width="20" height="32" viewBox="0 0 20 32"><path d="M2.2 2.2V25.6L7.4 20.6L11.6 29.6L15.2 27.9L11.1 19.2H18Z" fill="#fff" stroke="#000" stroke-width="1.3" stroke-linejoin="miter"/></svg>
<svg style="position:absolute;left:1125px;top:245.2px" width="24" height="24" viewBox="-12 -12 24 24"><circle cx="0" cy="0" r="8.5" fill="none" stroke="#2b99ef" stroke-width="5"/><path d="M-7.6 3.8A8.5 8.5 0 0 1 -6 -6" fill="none" stroke="#27c4ff" stroke-width="5"/></svg>
<div style="position:absolute;left:816px;top:226px;width:354px;height:50px;border:11px solid #ff0000;border-radius:7.5px;box-sizing:border-box;"></div>
<svg style="position:absolute;left:0;top:0" width="2160" height="1369"><polygon points="1158.7,307.7 1177.6,374.7 1186.2,357.9 1517.9,846.7 1526.9,840.7 1195.2,351.8 1214.0,350.0" fill="#ff0000"/></svg>
</body></html>
